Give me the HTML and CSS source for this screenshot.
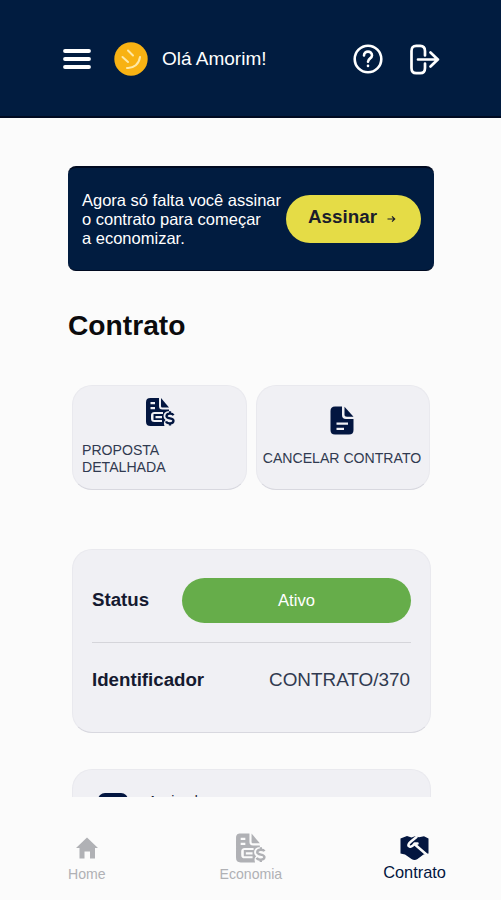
FILE: index.html
```
<!DOCTYPE html>
<html lang="pt-BR">
<head>
    <meta charset="UTF-8">
    <meta name="viewport" content="width=device-width, initial-scale=1.0">
    <title>Contrato</title>
    <link rel="stylesheet" href="styles.css">
</head>
<body>
    <svg width="0" height="0" class="sprite">
        <symbol id="icon-bill" viewBox="0 0 30 30">
            <path fill="currentColor" fill-rule="evenodd" d="M5.500 1H14v8c0 2.500 1 3.500 3.500 3.500H24V14c-3.500.3-5.500 2.200-5.500 5 0 2 1 3 2 4-1.800 1.500-2 3.500-1 6H5.500C2.300 29 1 27.500 1 24.500v-19C1 2.300 2.300 1 5.500 1zM5.500 5v2.200H10V5zM5.500 10v2.200H10V10zM9.500 15C7 15 6 16.200 6 18.500v3C6 24 7 25 9.500 25H17v-2H8.500v-6H18v-2zM10.500 19v2.200H17V19z"/>
            <path fill="currentColor" d="M16 1l8 9.500h-6.500c-1 0-1.500-.5-1.500-1.500z"/>
            <path fill="none" stroke="currentColor" stroke-width="2.300" d="M28.500 18.200c-1-2-7-2.400-7 1 0 3 7 1.500 7 4.600 0 3.400-6.500 3-7.500.6M25 14.200v3M25 25.500v3"/>
        </symbol>
    </svg>

    <header class="topbar">
        <svg class="menu" width="28" height="22" viewBox="0 0 28 22">
            <path d="M2 3h24M2 11h24M2 19h24" stroke="#fff" stroke-width="3.800" stroke-linecap="round"/>
        </svg>
        <svg class="avatar" width="34" height="34" viewBox="0 0 34 34">
            <circle cx="17" cy="17" r="16.700" fill="#f8b213"/>
            <path d="M14 8.500l5 5M8.500 15l5.500 5M13 26c7 .5 12-4 13-11" fill="none" stroke="#ffe9a6" stroke-width="2" stroke-linecap="round"/>
        </svg>
        <span class="greeting">Olá Amorim!</span>
        <svg class="help" width="30" height="30" viewBox="0 0 30 30" fill="none" stroke="#fff" stroke-width="2.600" stroke-linecap="round">
            <circle cx="15" cy="15" r="13.300"/>
            <path d="M11 11.500c0-5.200 8-5.200 8 0 0 3-4 2.800-4 6.300M15 21.800v.2"/>
        </svg>
        <svg class="logout" width="31" height="31" viewBox="0 0 31 31" fill="none" stroke="#fff" stroke-width="2.700" stroke-linecap="round" stroke-linejoin="round">
            <path d="M16 11.500V7c0-3.500-1.500-5.200-4.700-5.200H7.200C4 1.800 2.500 3.500 2.500 7v17c0 3.500 1.500 5.200 4.700 5.200h4.100c3.200 0 4.700-1.700 4.700-5.200v-4.500M9 15.500h20M21.500 8.500l7.300 7-7.300 7"/>
        </svg>
    </header>

    <main>
        <section class="banner">
            <p>Agora só falta você assinar<br>o contrato para começar<br>a economizar.</p>
            <button class="sign">Assinar
                <svg width="9" height="8" viewBox="0 0 9 8"><path d="M.5 4h7M5 1.300L7.700 4 5 6.700" fill="none" stroke="#1b1d2b" stroke-width="1.200"/></svg>
            </button>
        </section>

        <h1>Contrato</h1>

        <div class="actions">
            <a class="card action">
                <svg class="bill" width="30" height="30"><use href="#icon-bill"/></svg>
                <span>PROPOSTA<br>DETALHADA</span>
            </a>
            <a class="card action cancel">
                <svg width="24" height="29" viewBox="0 0 24 29">
                    <path fill="#031640" fill-rule="evenodd" d="M5 .5h7V9c0 2.700 1.300 4 4 4h7.500v11c0 3-1.500 4.500-4.500 4.500H5C2 28.500.5 27 .5 24V5C.5 2 2 .5 5 .5zM6.500 16.500v2.200H18v-2.200zM6.500 21.700v2.200H14v-2.200z"/>
                    <path fill="#031640" d="M14.500.7l9 10H17c-1.700 0-2.500-.7-2.500-2.500z"/>
                </svg>
                <span>CANCELAR CONTRATO</span>
            </a>
        </div>

        <section class="card details">
            <div class="row status">
                <strong>Status</strong>
                <span class="badge">Ativo</span>
            </div>
            <div class="row">
                <strong>Identificador</strong>
                <span class="code">CONTRATO/370</span>
            </div>
        </section>

        <section class="card signed">
            <i class="signed-icon"></i>
            <span>Assinado</span>
        </section>
    </main>

    <nav class="tabs">
        <a class="tab home">
            <svg width="22" height="21" viewBox="0 0 22 21"><path fill="currentColor" d="M11 0l11 10.500h-3V21h-5v-7H8.500v7h-5V10.500H0z"/></svg>
            Home
        </a>
        <a class="tab economy">
            <svg width="31" height="30" viewBox="0 0 30 30"><use href="#icon-bill"/></svg>
            Economia
        </a>
        <a class="tab active">
            <svg width="29" height="25" viewBox="0 0 29 25">
                <path fill="currentColor" d="M.5 3L7 .5l4.500 1.500L15 .8l4 1L24 .8 28.500 3v15l-5 1-6 4.500c-2 1.300-4 1.300-6 0L5 19l-4.500-1z"/>
                <path fill="none" stroke="#fbfbfb" stroke-width="2.500" stroke-linecap="round" stroke-linejoin="round" d="M16.500 1.500L11 6c-2.500 2-3.500 4-1.500 5 2.500.7 4-1.200 5-3h3M15.500 9.500L26.500 19"/>
            </svg>
            Contrato
        </a>
    </nav>
</body>
</html>
```
FILE: styles.css
```
* {
    box-sizing: border-box;
}
body {
    margin: 0;
    height: 900px;
    display: flex;
    flex-direction: column;
    overflow: hidden;
    font-family: 'Liberation Sans', Arial, sans-serif;
    color: #151a30;
    background-color: #fbfbfb;
}
svg {
    display: block;
    flex-shrink: 0;
}
.sprite {
    position: absolute;
}
.topbar {
    display: flex;
    align-items: center;
    height: 118px;
    padding: 2px 61px 0 63px;
    background-color: #011c40;
    border-bottom: 2px solid #000a20;
    flex-shrink: 0;
}
.avatar {
    margin-left: 23px;
}
.greeting {
    margin-left: 14px;
    font-size: 19px;
    color: #fff;
}
.help {
    margin-left: auto;
}
.logout {
    margin-left: 26px;
}
main {
    height: 679px;
    padding: 48px 67px 0 68px;
    overflow: hidden;
    flex-shrink: 0;
}
.banner {
    display: flex;
    align-items: center;
    justify-content: space-between;
    height: 105px;
    padding: 0 13px 0 14px;
    border-radius: 8px;
    border-top: 2px solid #000a20;
    border-bottom: 1px solid #000a20;
    background-color: #011c40;
}
.banner p {
    margin: 0;
    font-size: 16.500px;
    line-height: 19px;
    color: #fff;
    white-space: nowrap;
}
.sign {
    display: flex;
    align-items: center;
    justify-content: center;
    gap: 10px;
    width: 135px;
    height: 48px;
    padding: 0 3px 4px 0;
    border: 0;
    border-radius: 24px;
    background-color: #e5dc46;
    color: #1b1d2b;
    font: bold 18.800px 'Liberation Sans', Arial, sans-serif;
}
.sign svg {
    margin-top: 4px;
}
h1 {
    margin: 38px 0 44px;
    font-size: 28.200px;
    line-height: 32px;
    color: #0b0b0d;
}
.card {
    background-color: #f0f0f4;
    border: 1px solid #e9e9ee;
    border-bottom-color: #d8d8df;
    border-radius: 20px;
}
.actions {
    display: flex;
    gap: 9px;
    margin: 0 4px;
}
.action {
    display: flex;
    flex-direction: column;
    width: 175px;
    height: 105px;
    padding: 11px 9px 0;
    font-size: 14.100px;
    line-height: 16.500px;
    color: #303a50;
}
.action svg {
    color: #031640;
    align-self: center;
    margin-bottom: 15px;
}
.cancel {
    width: 174px;
    padding: 20px 2px 0 0;
    align-items: center;
    white-space: nowrap;
}
.details {
    height: 184px;
    margin: 59px 3px 36px 4px;
    padding: 28px 19px;
    font-size: 18.700px;
}
.row {
    display: flex;
    align-items: center;
    justify-content: space-between;
    height: 73px;
}
.status {
    height: 65px;
    padding-bottom: 20px;
    border-bottom: 1px solid #d5d5da;
}
.badge {
    width: 229px;
    height: 45px;
    border-radius: 23px;
    background-color: #66ad4a;
    color: #fff;
    font-size: 16.600px;
    line-height: 46px;
    text-align: center;
}
.code {
    margin-right: 1px;
    font-size: 18.900px;
    color: #303a50;
}
.signed {
    display: flex;
    height: 120px;
    margin: 0 3px 0 4px;
    padding: 23px 25px;
    font-size: 14px;
}
.signed-icon {
    width: 30px;
    height: 36px;
    margin-right: 20px;
    border-radius: 7px;
    background-color: #031640;
}
.tabs {
    display: flex;
    justify-content: space-between;
    height: 103px;
    padding: 35px 55px 0 68px;
    color: #b0b1b5;
}
.tab {
    display: flex;
    flex-direction: column;
    align-items: center;
    font-size: 14.100px;
    line-height: 18px;
}
.tab svg {
    height: 32px;
    margin-bottom: 1px;
}
.economy {
    margin-left: 13px;
}
.active {
    font-size: 16.400px;
    color: #031640;
}
.active svg {
    margin-bottom: -1px;
}
```
